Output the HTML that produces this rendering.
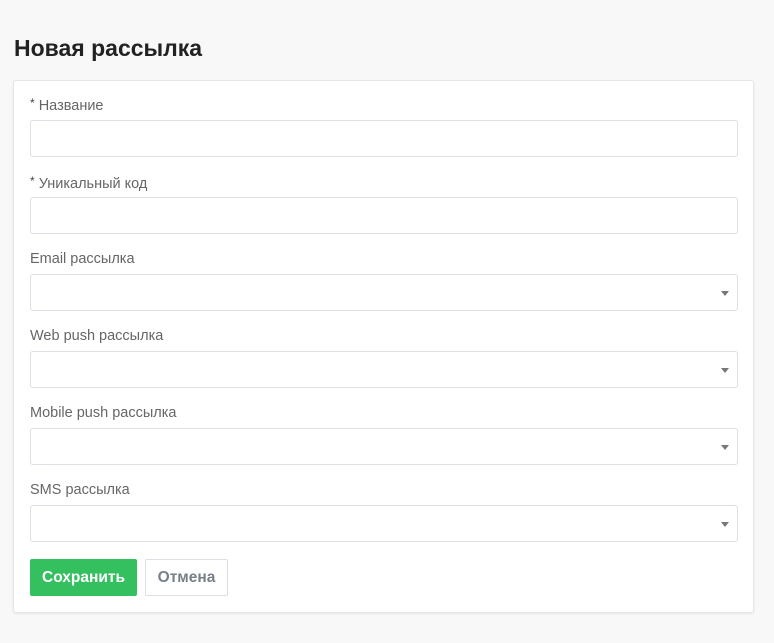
<!DOCTYPE html><html><head><style>
body{margin:0;background:#f8f8f8;font-family:"Liberation Sans",sans-serif;width:774px;height:643px;position:relative;overflow:hidden}
h1{position:absolute;left:14px;top:35px;margin:0;font-size:23px;font-weight:bold;color:#222}
.card{position:absolute;left:13px;top:80px;width:739px;height:531px;background:#fff;border:1px solid #e6e6e6;border-radius:3px;box-shadow:0 1px 2px rgba(0,0,0,.08)}
.l{position:absolute;left:16px;font-size:14.5px;color:#666}
.l b{font-weight:normal;color:#444;font-size:12px;vertical-align:3px}
.i{position:absolute;left:16px;width:706px;height:35px;border:1px solid #dcdfe6;border-radius:3px}
.a{position:absolute;right:8px;top:16px;border-left:4px solid transparent;border-right:4px solid transparent;border-top:5px solid #777}
.btn{position:absolute;top:478px;height:37px;line-height:37px;font-size:15.5px;font-weight:bold;border-radius:2px;text-align:center}
</style></head><body>
<h1>Новая рассылка</h1>
<div class="card">
<div class="l" style="top:15px"><b>*</b> Название</div><div class="i" style="top:39px"></div>
<div class="l" style="top:93px"><b>*</b> Уникальный код</div><div class="i" style="top:116px"></div>
<div class="l" style="top:170px">Email рассылка</div><div class="i" style="top:193px"><span class="a"></span></div>
<div class="l" style="top:247px">Web push рассылка</div><div class="i" style="top:270px"><span class="a"></span></div>
<div class="l" style="top:324px">Mobile push рассылка</div><div class="i" style="top:347px"><span class="a"></span></div>
<div class="l" style="top:401px">SMS рассылка</div><div class="i" style="top:424px"><span class="a"></span></div>
<div class="btn" style="left:16px;width:107px;background:#35c060;color:#fff">Сохранить</div>
<div class="btn" style="left:131px;width:81px;height:35px;line-height:35px;border:1px solid #dcdfe6;color:#778088">Отмена</div>
</div>
</body></html>
